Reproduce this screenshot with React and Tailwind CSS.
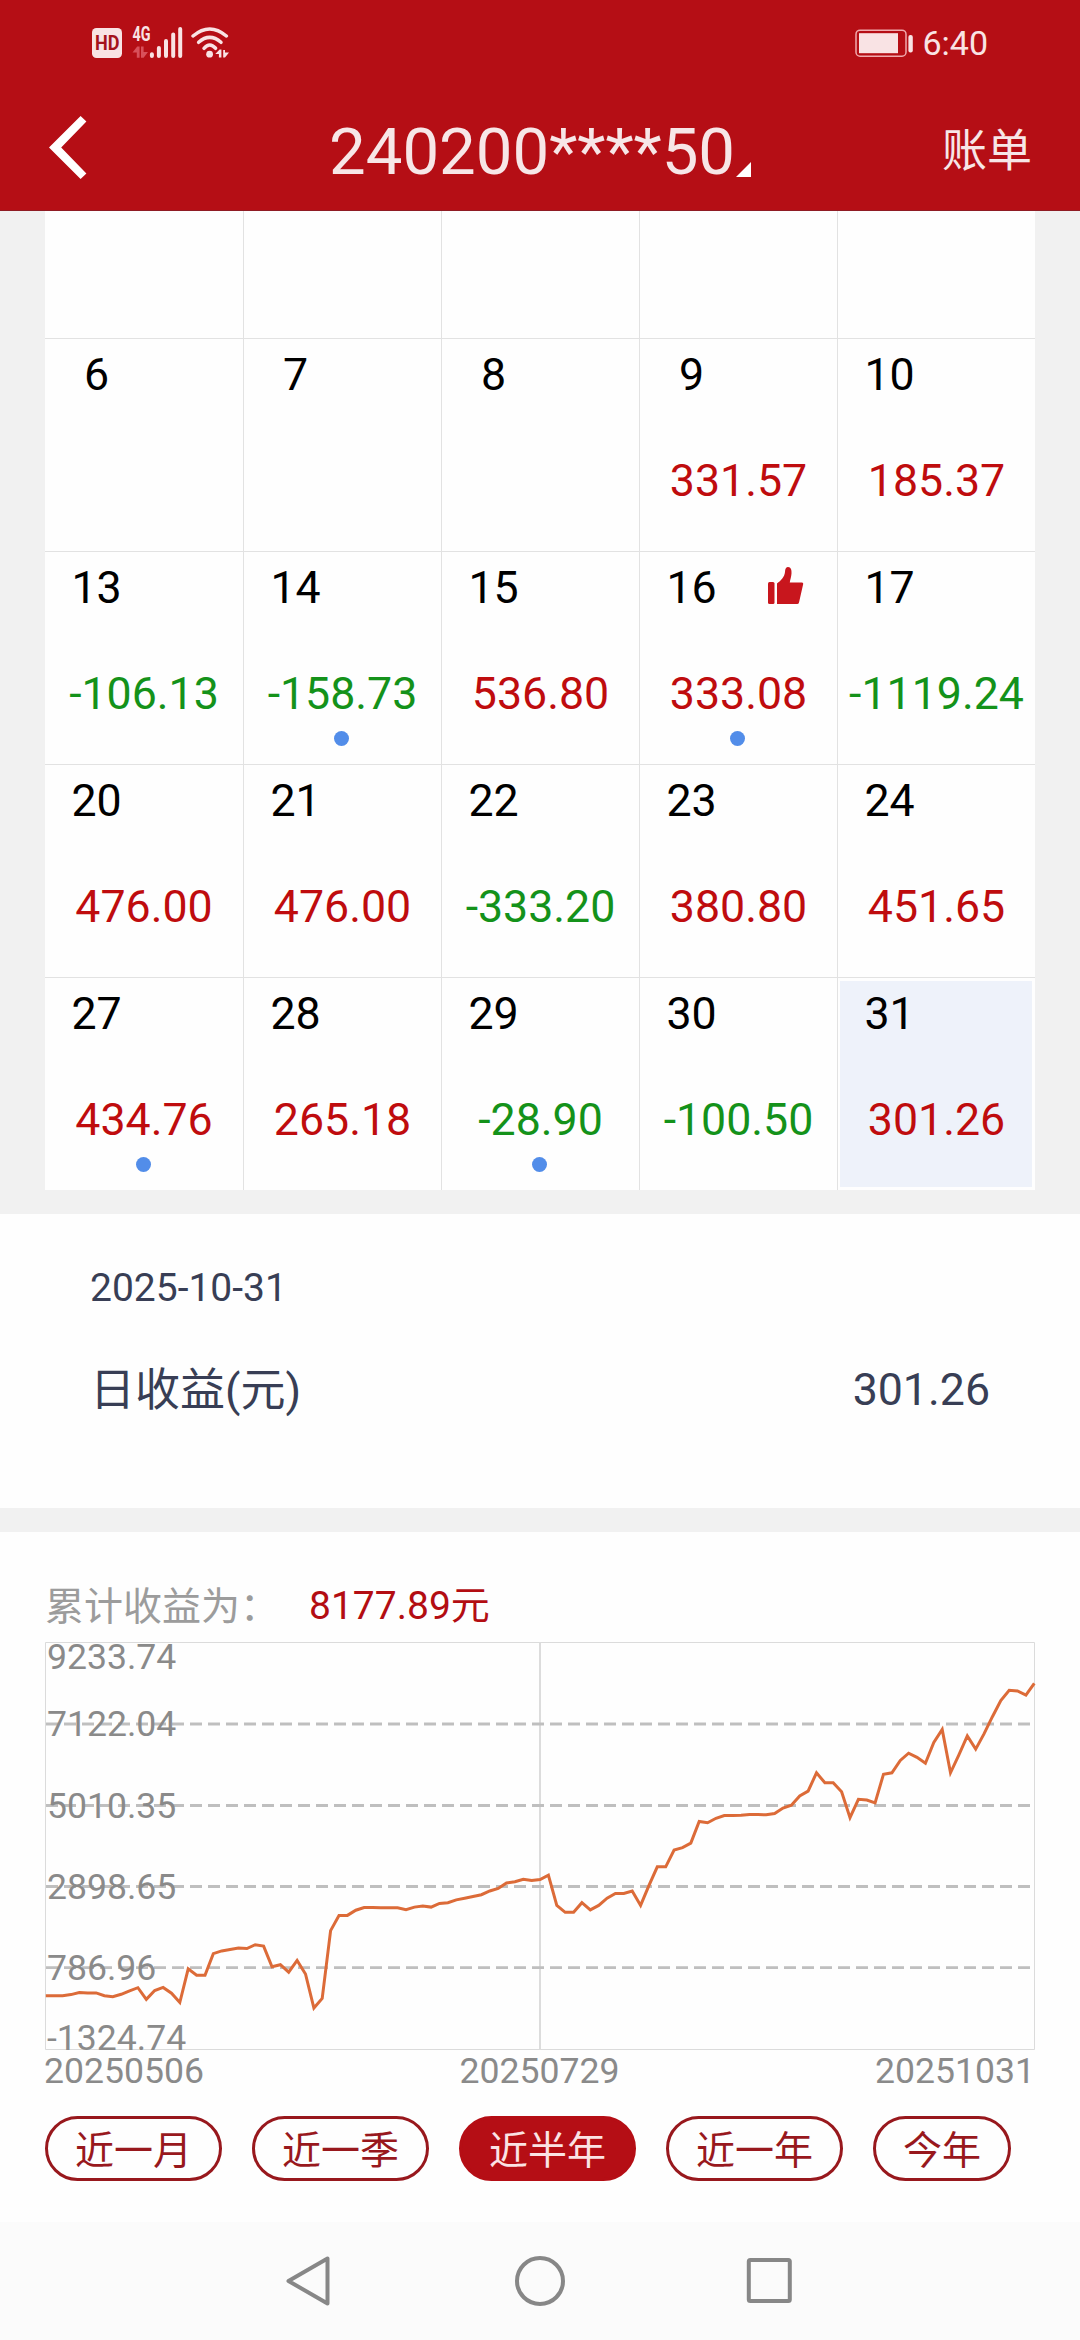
import React from "react";

const WEEKS = [
  [{ day: 6 }, { day: 7 }, { day: 8 }, { day: 9, value: "331.57" }, { day: 10, value: "185.37" }],
  [
    { day: 13, value: "-106.13" },
    { day: 14, value: "-158.73", dot: true },
    { day: 15, value: "536.80" },
    { day: 16, value: "333.08", dot: true, best: true },
    { day: 17, value: "-1119.24" },
  ],
  [
    { day: 20, value: "476.00" },
    { day: 21, value: "476.00" },
    { day: 22, value: "-333.20" },
    { day: 23, value: "380.80" },
    { day: 24, value: "451.65" },
  ],
  [
    { day: 27, value: "434.76", dot: true },
    { day: 28, value: "265.18" },
    { day: 29, value: "-28.90", dot: true },
    { day: 30, value: "-100.50" },
    { day: 31, value: "301.26", selected: true },
  ],
];

// Cumulative profit samples, measured downwards on the plot's fine grid.
const SAMPLES = [
  1265, 1265, 1265, 1262, 1256, 1257, 1257, 1265, 1268, 1261, 1251, 1242, 1276, 1250, 1241, 1258, 1285, 1187, 1206,
  1206, 1143, 1135, 1131, 1127, 1128, 1117, 1121, 1181, 1175, 1197, 1163, 1202, 1301, 1273, 1076, 1032, 1032, 1017,
  1009, 1009, 1010, 1010, 1010, 1015, 1008, 1005, 1008, 997, 995, 987, 982, 977, 972, 961, 954, 938, 934, 927, 931,
  928, 915, 1003, 1023, 1023, 995, 1016, 1003, 982, 968, 968, 961, 1003, 945, 891, 891, 842, 835, 822, 759, 763, 750,
  742, 742, 741, 739, 739, 740, 736, 720, 712, 685, 671, 618, 647, 647, 673, 748, 695, 697, 705, 622, 618, 582, 561,
  573, 590, 530, 492, 618, 566, 511, 549, 505, 455, 408, 378, 380, 392, 358,
];
const GRID_PER_PX = 2.9037;
const LINE = SAMPLES.map(
  (s, i) => `${(0.8 + (i * 988.5) / (SAMPLES.length - 1)).toFixed(1)},${(s / GRID_PER_PX - 82).toFixed(1)}`
).join(" ");

const Y_LABELS = [
  ["9233.74", 27],
  ["7122.04", 94],
  ["5010.35", 175.5],
  ["2898.65", 257],
  ["786.96", 338],
  ["-1324.74", 408],
];

const RANGES = ["近一月", "近一季", "近半年", "近一年", "今年"];

function StatusBar() {
  return (
    <div className="flex h-[92px] items-start justify-between pl-[92px] pr-[92px] pt-[22px] text-[#f9e3e4]">
      <svg width="140" height="40" viewBox="92 22 140 40" fill="currentColor">
        <rect x="92" y="28" width="30" height="30" rx="4.5" />
        <text x="95" y="50.3" fontSize="20" fontWeight="700" textLength="24.5" lengthAdjust="spacingAndGlyphs" fill="#a5121c" fontFamily="Roboto">HD</text>
        <text x="132.5" y="41.3" fontSize="20" fontWeight="700" textLength="18" lengthAdjust="spacingAndGlyphs" fontFamily="Roboto">4G</text>
        <g fill="#d8505a">
          <path d="M132.5 52.5 L137.2 46.5 H139.6 V57.8 H136.8 V52.5 Z" />
          <path d="M141 46.5 H143.6 V52 H148 L143.6 57.8 H141 Z" />
        </g>
        <g stroke="currentColor" strokeWidth="4" strokeLinecap="round">
          <path d="M151.9 54.2V56M158.9 48V56M166 41V56M173.2 34.5V56M180.2 29V56" />
        </g>
        <g fill="none" stroke="currentColor" strokeWidth="3.5" strokeLinecap="round">
          <path d="M193 36 Q209.7 22 226.4 36" />
          <path d="M198.6 42.3 Q209.7 32.4 221 42.3" />
          <path d="M204 48.3 Q209.7 41.8 215.6 48.3" />
        </g>
        <circle cx="209.6" cy="54.2" r="3.4" />
        <path d="M215.3 54 L219.6 49.6 H221.4 V57.6 H218.9 V54 Z" />
        <path d="M223.2 50 H225 V52.4 H229 L225 57.6 H223.2 Z" />
      </svg>
      <div className="flex items-center">
        <svg width="59" height="30" viewBox="0 0 59 30" fill="currentColor">
          <rect x="1" y="2.2" width="50" height="26" rx="4" fill="none" stroke="#f0a9ad" strokeWidth="1.5" />
          <rect x="4" y="5.2" width="39" height="20" />
          <rect x="53.4" y="6.9" width="4.4" height="17.5" rx="2" />
        </svg>
        <span className="ml-[8px] mt-[1px] text-[34px] leading-[40px]">6:40</span>
      </div>
    </div>
  );
}

function Header() {
  return (
    <header className="h-[211px] border-b border-[#8f1c24] bg-[#b50e15]">
      <StatusBar />
      <div className="flex h-[118px] items-center pl-[49px] pr-[48px] text-[#f7e6e7]">
        <svg width="38" height="63" viewBox="0 0 38 63" className="-mt-[7px]">
          <path d="M0 31.5 L31.6 0 L37.4 5.6 L12.2 31.5 L37.4 57.4 L31.6 63 Z" fill="#fff" />
        </svg>
        <span className="ml-[242px] mt-[2px] text-[65.3px] leading-[80px]">240200****50</span>
        <svg width="15" height="15" viewBox="0 0 15 15" className="ml-[1px] mt-[37px]">
          <path d="M0 15 L15 0 V15 Z" fill="#fff" />
        </svg>
        <span className="ml-auto mt-[1px] text-[45px] leading-[60px]">账单</span>
      </div>
    </header>
  );
}

function DayCell({ day, value, dot, best, selected }) {
  return (
    <div className="h-[213px] border-l border-t border-[#e2e2e2] bg-[#fefefe] first:border-l-0">
      <div className={selected ? "mb-[3px] ml-[2px] mr-[3px] mt-[3px] h-[206px] bg-[#eef2fa] pt-[10px]" : "h-[212px] pt-[13px]"}>
        <div className={selected ? "-ml-[2px] -mr-[3px]" : ""}>
          <div className="flex h-[46px] items-center">
            <div className="w-[103px] text-center text-[44.7px] leading-[46px] text-black">{day}</div>
            {best && (
              <svg width="36" height="37" viewBox="0 0 36 37" className="-mt-[6px] ml-[25px]" fill="#c8161d">
                <rect x="0" y="15" width="6.5" height="22" rx="1.5" />
                <path d="M9 37 V16.5 C13 13.5 16.5 10 17 5 C17 1.5 18.3 0 20 0 C23 0 23.8 3 23.5 6.5 C23.3 10 22 13 21.8 15.5 H34 Q35.5 15.5 35.2 17 L31 35.5 Q30.7 37 29 37 Z" />
              </svg>
            )}
          </div>
          {value && (
            <div className={`mt-[60px] text-center text-[44.7px] leading-[46px] ${value.startsWith("-") ? "text-[#14921a]" : "text-[#bf0c0e]"}`}>
              {value}
            </div>
          )}
          {dot && (
            <div className="mt-[14px] flex justify-center pr-[2px]">
              <div className="h-[15px] w-[15px] rounded-full bg-[#528de9]" />
            </div>
          )}
        </div>
      </div>
    </div>
  );
}

function Calendar() {
  return (
    <section className="bg-[#f1f1f1] px-[45px] pb-[24px]">
      <div className="grid grid-cols-5">
        {[0, 1, 2, 3, 4].map((i) => (
          <div key={i} className="h-[127px] border-l border-[#e2e2e2] bg-[#fefefe] first:border-l-0" />
        ))}
      </div>
      {WEEKS.map((week) => (
        <div key={week[0].day} className="grid grid-cols-5">
          {week.map((d) => (
            <DayCell key={d.day} {...d} />
          ))}
        </div>
      ))}
    </section>
  );
}

function DayDetail() {
  return (
    <section className="h-[294px] bg-[#fefefe] px-[90px] pt-[54px] text-[#383e55]">
      <div className="text-[39px] leading-[40px]">2025-10-31</div>
      <div className="mt-[59px] flex justify-between leading-[46px]">
        <span className="mt-[1px] text-[45px]">日收益(元)</span>
        <span className="text-[44.7px]">301.26</span>
      </div>
    </section>
  );
}

function ProfitChart() {
  return (
    <svg width="990" height="408" viewBox="0 0 990 408" className="mt-[16px] block overflow-visible">
      <path d="M0.5 0.5 H989.5 V407.5 H0.5 Z" fill="none" stroke="#dbdbdb" strokeWidth="1" />
      <path d="M495 0 V408" stroke="#dcdcdc" strokeWidth="2" />
      <path d="M1 82 H989 M1 163.5 H989 M1 244.5 H989 M1 325.7 H989" stroke="#bfbfbf" strokeWidth="2.8" strokeDasharray="12 6" />
      <g fontSize="35.6" fill="#8a8a8a">
        {Y_LABELS.map(([label, y]) => (
          <text key={label} x="2" y={y}>{label}</text>
        ))}
      </g>
      <polyline points={LINE} fill="none" stroke="#dc6b38" strokeWidth="3" strokeLinejoin="miter" />
    </svg>
  );
}

function Profit() {
  return (
    <section className="h-[690px] bg-[#fefefe] px-[45px] pt-[54px]">
      <div className="flex text-[39px] leading-[40px]">
        <span className="mt-[1px] w-[264px] text-[#9c9c9c]">累计收益为：</span>
        <span className="text-[#b30d12]">8177.89元</span>
      </div>
      <div className="-mt-[1px]">
        <ProfitChart />
      </div>
      <div className="mt-[3px] flex justify-between text-[35.6px] leading-[36px] text-[#8a8a8a]">
        <span className="-ml-[1px]">20250506</span>
        <span>20250729</span>
        <span>20251031</span>
      </div>
      <div className="mt-[27px] flex gap-[30px] text-[39px]">
        {RANGES.map((r) => (
          <div
            key={r}
            className={`h-[65px] rounded-full border-[3px] px-[27px] leading-[64px] ${
              r === "近半年" ? "border-[#b50e15] bg-[#b50e15] text-[#fbe3e4]" : "border-[#98181d] text-[#98181d]"
            }`}
          >
            {r}
          </div>
        ))}
      </div>
    </section>
  );
}

function NavBar() {
  return (
    <nav className="flex h-[118px] items-center justify-center gap-[178px] bg-[#fbfbfb]">
      <svg width="52" height="52" viewBox="0 0 52 52" fill="none" stroke="#878787" strokeWidth="4" strokeLinejoin="round">
        <path d="M43.5 3.5 V48.5 L4.5 26 Z" />
      </svg>
      <svg width="52" height="52" viewBox="0 0 52 52" fill="none" stroke="#878787" strokeWidth="4">
        <circle cx="26" cy="26" r="23" />
      </svg>
      <svg width="52" height="52" viewBox="0 0 52 52" fill="none" stroke="#878787" strokeWidth="4">
        <rect x="4.8" y="5" width="41" height="41" rx="1.5" />
      </svg>
    </nav>
  );
}

export default function App() {
  return (
    <div className="h-[2340px] w-[1080px] overflow-hidden bg-[#f1f1f1] font-[Roboto,'Noto_Sans_CJK_SC',sans-serif]">
      <Header />
      <Calendar />
      <DayDetail />
      <div className="h-[24px]" />
      <Profit />
      <NavBar />
    </div>
  );
}
